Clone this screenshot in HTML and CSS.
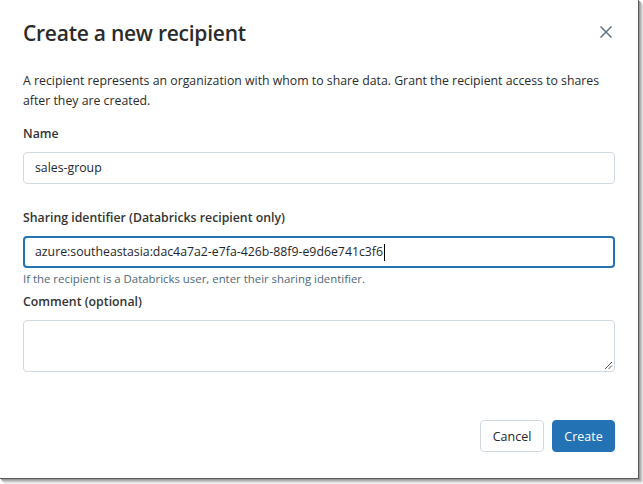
FILE: index.html
```html
<!DOCTYPE html>
<html lang="en">
<head>
<meta charset="utf-8">
<title>Create a new recipient</title>
<link rel="stylesheet" href="styles.css">
</head>
<body>
<div class="dialog">
  <header class="dialog-header">
    <h1 class="dialog-title">Create a new recipient</h1>
    <button class="close-btn" aria-label="Close">
      <svg width="14" height="14" viewBox="0 0 14 14"><path d="M1.5 1.5 L12.5 12.5 M12.5 1.5 L1.5 12.5" stroke="#5f7281" stroke-width="1.5" fill="none"/></svg>
    </button>
  </header>
  <p class="intro">A recipient represents an organization with whom to share data. Grant the recipient access to shares after they are created.</p>
  <div class="field field-name">
    <label class="label">Name</label>
    <div class="input">sales-group</div>
  </div>
  <div class="field field-sharing">
    <label class="label">Sharing identifier (Databricks recipient only)</label>
    <div class="input focused">azure:southeastasia:dac4a7a2-e7fa-426b-88f9-e9d6e741c3f6<span class="caret"></span></div>
    <div class="help">If the recipient is a Databricks user, enter their sharing identifier.</div>
  </div>
  <div class="field field-comment">
    <label class="label">Comment (optional)</label>
    <div class="textarea"><svg class="grip" width="9" height="9" viewBox="0 0 9 9"><path d="M8 1 L1 8 M8 4.5 L4.5 8" stroke="#555" stroke-width="1" fill="none"/></svg></div>
  </div>
  <footer class="dialog-footer">
    <button class="btn btn-default">Cancel</button>
    <button class="btn btn-primary">Create</button>
  </footer>
</div>
</body>
</html>
```
FILE: styles.css
```css
html, body {
  margin: 0;
  padding: 0;
  background: #ffffff;
}
body {
  font-family: "Open Sans", "Noto Sans", "Liberation Sans", sans-serif;
  color: #1f272d;
  width: 643px;
  height: 484px;
  overflow: hidden;
}
.dialog {
  background: #fff;
  border-right: 1px solid #5a5a5a;
  border-bottom: 1px solid #5a5a5a;
  box-shadow: 1px 1px 0 #9a9a9a, 2px 2px 1px #b0b0b0, 3px 3px 2px #c8c8c8, 4px 4px 2px #e0e0e0;
  padding: 0 23px;
  box-sizing: border-box;
  width: 639px;
  height: 479px;
  display: flex;
  flex-direction: column;
}
.dialog-header {
  display: flex;
  align-items: center;
  justify-content: space-between;
  height: 64px;
}
.dialog-title {
  margin: 0;
  font-size: 21px;
  font-weight: 600;
  color: #2b2b2b;
  letter-spacing: -0.25px;
  padding-top: 1px;
}
.close-btn {
  background: none;
  border: 0;
  padding: 0;
  width: 14px;
  height: 14px;
  margin-right: 2px;
  display: flex;
}
.intro {
  margin: 7px 0 0;
  font-size: 12.3px;
  line-height: 20px;
  color: #2b2b2b;
}
.field {
  display: flex;
  flex-direction: column;
}
.label {
  font-size: 12.3px;
  font-weight: 600;
  line-height: 20px;
  color: #333;
  margin-bottom: 8px;
}
.field-name .label { margin-top: 13px; }
.field-sharing .label { margin-top: 24px; }
.input {
  height: 32px;
  box-sizing: border-box;
  border: 1px solid #d1d9e1;
  border-radius: 4px;
  padding: 0 11px;
  font-size: 12.3px;
  line-height: 30px;
  color: #1f272d;
  display: flex;
  align-items: center;
}
.input.focused {
  border: 2px solid #2272b4;
  padding: 0 10px;
}
.caret {
  display: inline-block;
  width: 1px;
  height: 17px;
  background: #000;
  margin-left: 1px;
}
.help {
  font-size: 11.4px;
  line-height: 18px;
  color: #4f6878;
  margin-top: 2px;
}
.field-comment .label { margin-top: 4px; }
.textarea {
  height: 52px;
  box-sizing: border-box;
  border: 1px solid #d1d9e1;
  border-radius: 4px;
  position: relative;
}
.grip {
  position: absolute;
  right: 1px;
  bottom: 1px;
}
.dialog-footer {
  margin-top: auto;
  margin-bottom: 26px;
  display: flex;
  justify-content: flex-end;
  gap: 8px;
}
.btn {
  height: 32px;
  box-sizing: border-box;
  border-radius: 4px;
  font-family: inherit;
  font-size: 12.5px;
  padding: 0;
  cursor: pointer;
}
.btn-default {
  background: #fff;
  border: 1px solid #d1d9e1;
  color: #1f272d;
  width: 64px;
}
.btn-primary {
  background: #2272b4;
  border: 1px solid #2272b4;
  color: #fff;
  width: 63px;
}
```
